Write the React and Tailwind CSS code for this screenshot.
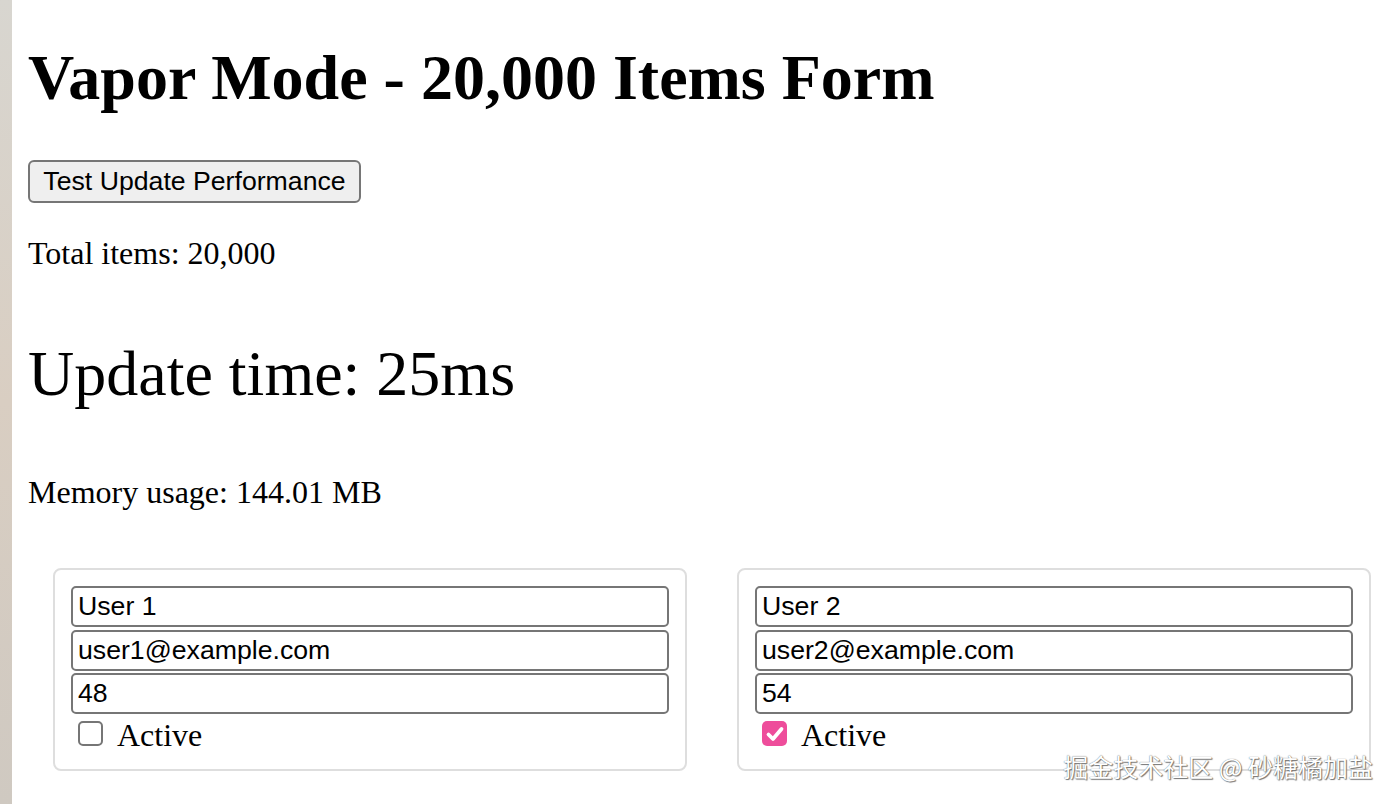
import React from 'react';

const users = [
  { name: 'User 1', email: 'user1@example.com', age: 48, active: false },
  { name: 'User 2', email: 'user2@example.com', age: 54, active: true },
];

const Field = ({ value }) => (
  <input
    readOnly
    value={value}
    className="block w-full h-[41px] pl-[5px] pr-[4px] border-2 border-[#767676] rounded-[5px] bg-white text-[26.67px] text-black font-['Liberation_Sans',Arial,sans-serif] outline-none"
  />
);

const Checkbox = ({ checked }) =>
  checked ? (
    <span className="mt-[4.5px] ml-[7px] mr-[14px] w-[25px] h-[25px] shrink-0 rounded-[5px] bg-[#ee4d9b] flex items-center justify-center">
      <svg width="20" height="20" viewBox="0 0 20 20" fill="none">
        <path d="M3.5 10.5 L8 15 L16.5 5" stroke="#fff" strokeWidth="3.8" strokeLinecap="round" strokeLinejoin="round" />
      </svg>
    </span>
  ) : (
    <span className="mt-[4.5px] ml-[7px] mr-[14px] w-[25px] h-[25px] shrink-0 rounded-[5px] border-2 border-[#767676] bg-white" />
  );

const UserCard = ({ user }) => (
  <div className="border-2 border-[#dedede] rounded-[8px] p-[16px] flex flex-col gap-[2.5px]">
    <Field value={user.name} />
    <Field value={user.email} />
    <Field value={user.age} />
    <label className="flex items-start h-[36px]">
      <Checkbox checked={user.active} />
      <span className="text-[32px] leading-[36px]">Active</span>
    </label>
  </div>
);

export default function App() {
  return (
    <div className="relative flex h-screen w-full overflow-hidden bg-white text-black font-['Liberation_Serif','Times_New_Roman',serif]">
      {/* wallpaper sliver on the left */}
      <div className="w-[12px] shrink-0 bg-gradient-to-b from-[#d8d6d0] via-[#d9cec2] to-[#cfc9c1]" />

      <div className="flex-1 px-[16px]">
        <h1 className="pt-[42px] text-[64px] leading-[72px] font-bold">Vapor Mode - 20,000 Items Form</h1>

        <button className="mt-[46px] w-[333px] h-[43px] border-2 border-[#767676] rounded-[6px] bg-[#efefef] text-[26.67px] leading-none font-['Liberation_Sans',Arial,sans-serif]">
          Test Update Performance
        </button>

        <p className="mt-[32px] text-[32px] leading-[36px]">Total items: 20,000</p>

        <h2 className="mt-[67px] text-[64px] leading-[72px] font-normal">Update time: 25ms</h2>

        <p className="mt-[64px] text-[32px] leading-[36px]">Memory usage: 144.01 MB</p>

        <div className="mt-[58px] pl-[25px] grid grid-cols-[634px_634px] gap-x-[50px]">
          {users.map((u) => (
            <UserCard key={u.name} user={u} />
          ))}
        </div>
      </div>

      <div className="absolute right-[23px] top-[750px] text-[25px] leading-[32px] text-white font-['Noto_Sans_CJK_SC','Noto_Sans',sans-serif] [text-shadow:0_0_1px_#555,1px_1px_1px_#777]">
        掘金技术社区 @ 砂糖橘加盐
      </div>
    </div>
  );
}
